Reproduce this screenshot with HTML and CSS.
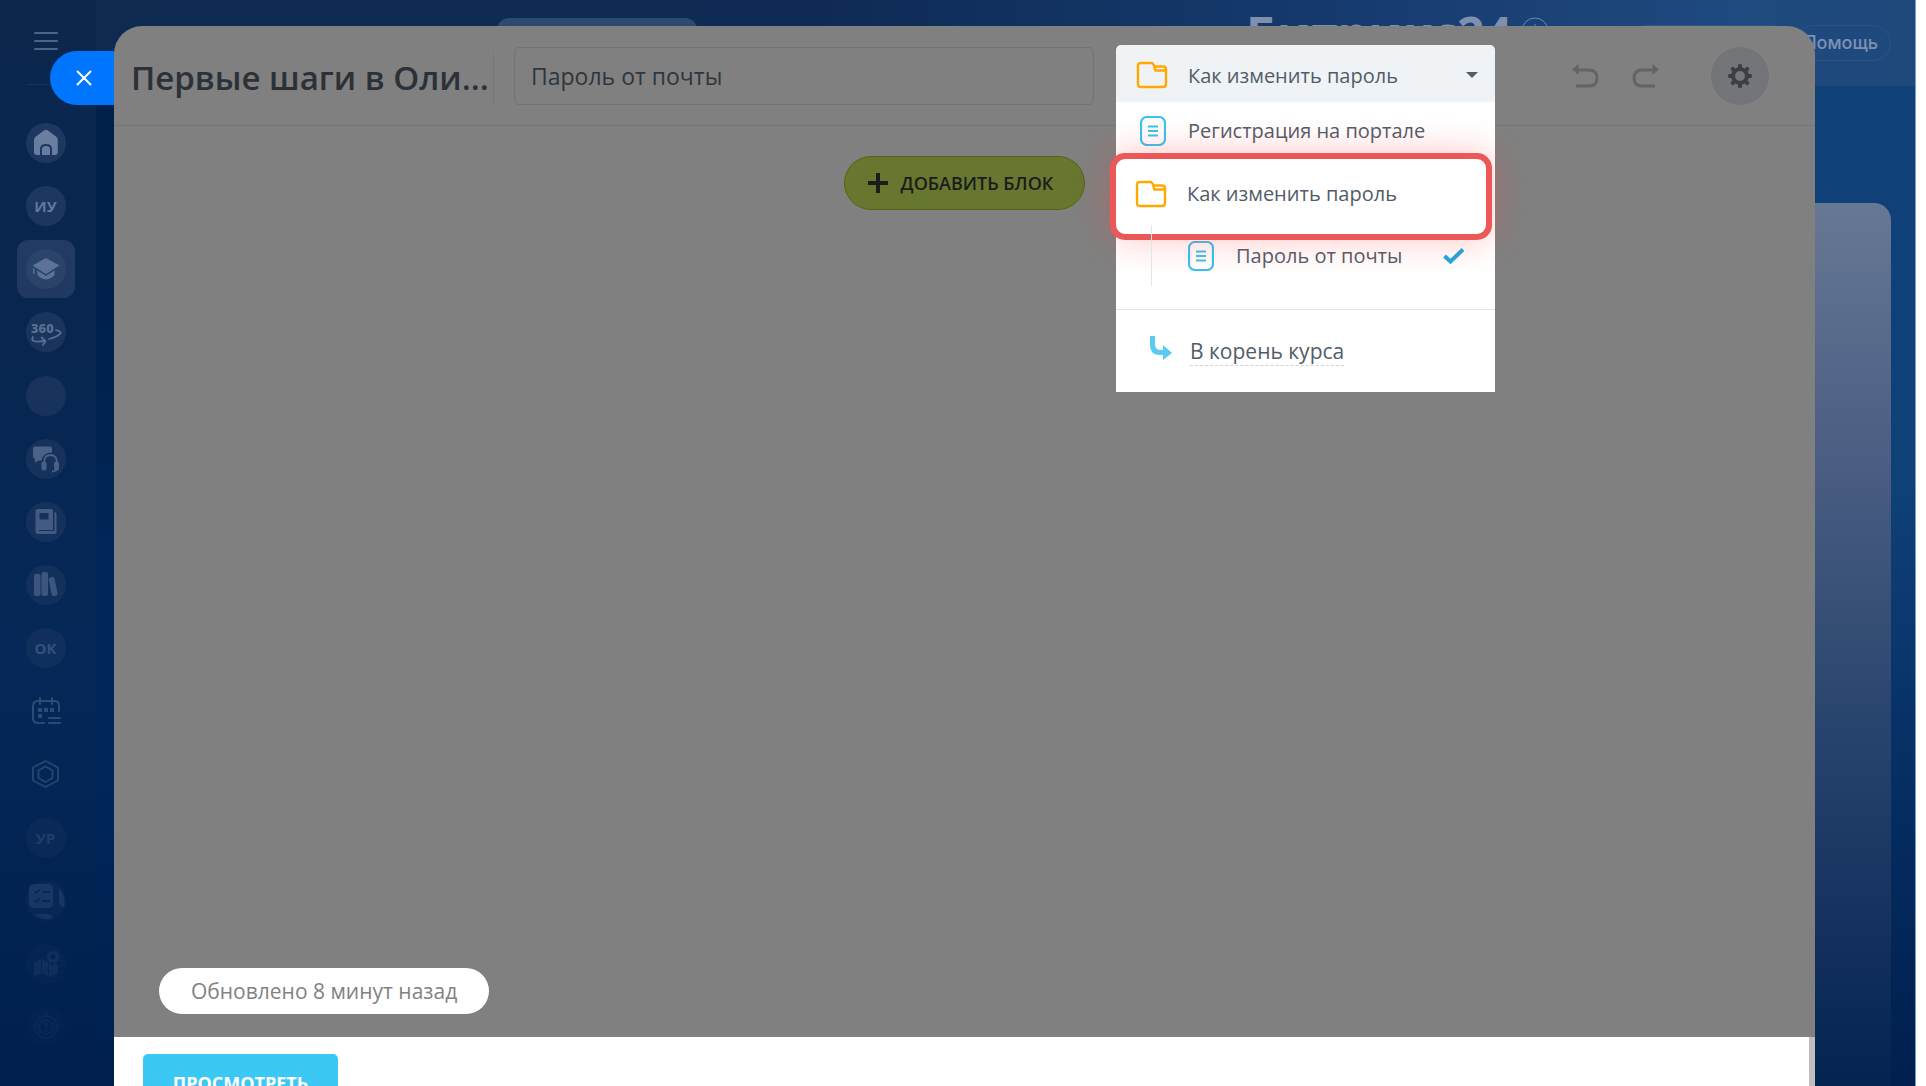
FILE: index.html
```html
<!DOCTYPE html>
<html lang="ru">
<head>
<meta charset="utf-8">
<title>Первые шаги — Битрикс24</title>
<link rel="stylesheet" href="styles.css">
</head>
<body>
<div class="desktop">
  <aside class="sidebar">
    <button class="burger" aria-label="Меню"><span></span><span></span><span></span></button>
    <div class="sidebar-line"></div>
    <nav class="nav">
      <a class="nav-item" href="#" aria-label="Главная"><svg viewBox="0 0 40 40"><path fill="currentColor" d="M18 7.500q2-1.600 4 0l8 6q1.800 1.400 1.800 3.500V29q0 3-3 3H26v-6q0-5-6-5t-6 5v6h-3q-3 0-3-3V17q0-2 1.800-3.500zM16 32v-6q0-3 4-3t4 3v6z"/></svg></a>
      <a class="nav-item" href="#">ИУ</a>
      <a class="nav-item active" href="#" aria-label="Обучение"><svg viewBox="0 0 40 40"><path fill="currentColor" d="M20 9l13.500 7.500L20 25 6.500 16.500zM11.500 21.500L20 27l8.500-5.500V26q-3.500 4-8.500 4.500-5-.5-8.500-4.500zM7 19l1.500 1v5H7z"/></svg></a>
      <a class="nav-item" href="#" aria-label="360"><svg viewBox="0 0 40 40"><g fill="none" stroke="currentColor" stroke-width="1.800" stroke-linecap="round" stroke-linejoin="round"><path d="M30 18q8 2 2 5.500-3 2-9 3.500M7 25q-3 5 6 4.500l6-.5M15.500 25.500l4 3.500-2.500 4"/></g><text x="5" y="21" class="nav-360">360</text></svg></a>
      <a class="nav-item" href="#" aria-label="Раздел"></a>
      <a class="nav-item" href="#" aria-label="Поддержка"><svg viewBox="0 0 40 40"><path fill="currentColor" d="M9 7.500h15q2 0 2 2v4q-9 0-10.500 8l-4 .5-2.500 2v-4q-2-.5-2-2.500v-8q0-2 2-2z"/><path d="M18 26v-3q.5-7 6.500-7t6.500 7v7q-1 2.500-5 2.500" fill="none" stroke="currentColor" stroke-width="1.800"/><rect x="15.500" y="22.500" width="5" height="9" rx="2" fill="currentColor"/><rect x="28" y="22.500" width="5" height="9" rx="2" fill="currentColor"/></svg></a>
      <a class="nav-item" href="#" aria-label="База знаний"><svg viewBox="0 0 40 40"><path fill="currentColor" fill-rule="evenodd" d="M12 7h13q2 0 2 2v19H13v1h15.500V10q2 0 2 2v18q0 2-2 2H12q-2.500 0-2.500-2.500V9.500Q9.500 7 12 7zm1.500 4v6.500h9V11z"/></svg></a>
      <a class="nav-item" href="#" aria-label="Библиотека"><svg viewBox="0 0 40 40" fill="currentColor"><rect x="8" y="9" width="6.500" height="22" rx="2"/><rect x="15.500" y="7" width="6.500" height="24" rx="2"/><rect x="24" y="12" width="6" height="19" rx="2" transform="rotate(-12 27 21)"/></svg></a>
      <a class="nav-item" href="#">ОК</a>
      <a class="nav-item plain" href="#" aria-label="Календарь"><svg viewBox="0 0 40 40"><g fill="none" stroke="currentColor" stroke-width="2" stroke-linecap="round"><path d="M18 32h-6q-5 0-5-5V15q0-5 5-5h17q4 0 4 5v5M14 7v6M26 7v6M23 27h11M23 32h11"/></g><path fill="currentColor" d="M12 17h4v4h-4zm6 0h4v4h-4zm6 0h4v4h-4zm-12 6h4v4h-4z"/></svg></a>
      <a class="nav-item plain" href="#" aria-label="Настройки"><svg viewBox="0 0 40 40"><g fill="none" stroke="currentColor" stroke-width="1.900" stroke-linejoin="round"><path d="M19.500 7L32 13.500v13L19.500 33 7 26.500v-13z"/><path d="M19.500 12.500l7 4v7.500l-7 4-7-4v-7.500z"/></g></svg></a>
      <a class="nav-item" href="#">УР</a>
      <a class="nav-item" href="#" aria-label="Задачи"><svg viewBox="0 0 40 40"><path fill="currentColor" fill-rule="evenodd" d="M9 3h13q5 0 5 5v14q0 5-5 5H8q-5 0-5-5V8q0-5 6-5zm-1 8l2.500 2 4-4-1.200-1.200-2.800 2.600L9 9.500zm8-1v2h8v-2zm-8 10l2.500 2 4-4-1.200-1.200-2.800 2.600L9 18.500zm8-1v2h8v-2zM33 7q7 8 5 19-5-1-5-6zM8 33h12q5 0 7 4-9 4-19-4z"/></svg></a>
      <a class="nav-item" href="#" aria-label="Карта"><svg viewBox="0 0 40 40"><path fill="currentColor" fill-rule="evenodd" d="M8 19l7-4v14l-7 4zm8-4l6 3v14l-6-3zm7 4l3-1 6 3v9l-9 3zM27 7q6 0 6 6 0 3-6 9-6-6-6-9 0-6 6-6zm0 3a2.800 2.800 0 100 5.600 2.800 2.800 0 000-5.600z"/></svg></a>
      <a class="nav-item" href="#" aria-label="Цели"><svg viewBox="0 0 40 40"><g fill="none" stroke="currentColor" stroke-width="2"><circle cx="20" cy="20" r="11"/><circle cx="20" cy="20" r="7"/><path d="M20 5v4M20 31v4M5 20h4M31 20h4M18 17l2.500-1.500V25"/></g></svg></a>
    </nav>
  </aside>
  <main class="main">
    <header class="topbar">
      <div class="topbar-tab"></div>
      <div class="logo">Битрикс24</div>
      <svg class="clock" viewBox="0 0 28 28"><path d="M14 7v7h5" /><circle cx="14" cy="14" r="13"/></svg>
      <div class="topbar-pill"></div>
      <a class="help" href="#">Помощь</a>
    </header>
    <div class="workarea"></div>
  </main>
</div>

<section class="panel">
  <button class="close" aria-label="Закрыть"><svg viewBox="0 0 16 16" width="16" height="16"><path d="M1 1l14 14M15 1L1 15"/></svg></button>
  <header class="panel-head">
    <h1 class="title">Первые шаги в Оли...</h1>
    <input class="name" type="text" aria-label="Название" value="Пароль от почты">
    <div class="picker">
      <button class="picker-toggle">
        <svg class="folder" viewBox="0 0 32 28"><path d="M5 2h11l3 3.500h8q3 0 3 3V23q0 3-3 3H5q-3 0-3-3V5q0-3 3-3zM18 5l1.500 4.500H30"/></svg>
        <span>Как изменить пароль</span>
        <i class="caret"></i>
      </button>
      <div class="picker-menu">
        <ul class="tree">
          <li><a class="row" href="#"><svg class="doc" viewBox="0 0 26 30"><rect x="1" y="1" width="24" height="28" rx="6"/><path d="M8 10.500h10M8 15h10M8 19.500h10"/></svg>Регистрация на портале</a></li>
          <li>
            <a class="row selected" href="#"><svg class="folder" viewBox="0 0 32 28"><path d="M5 2h11l3 3.500h8q3 0 3 3V23q0 3-3 3H5q-3 0-3-3V5q0-3 3-3zM18 5l1.500 4.500H30"/></svg>Как изменить пароль</a>
            <ul class="subtree">
              <li><a class="row" href="#"><svg class="doc" viewBox="0 0 26 30"><rect x="1" y="1" width="24" height="28" rx="6"/><path d="M8 10.500h10M8 15h10M8 19.500h10"/></svg>Пароль от почты<svg class="check" viewBox="0 0 22 16"><path d="M1.500 8l6 5.500L20 1.500"/></svg></a></li>
            </ul>
          </li>
        </ul>
        <div class="root-row">
          <svg class="arrow" viewBox="0 0 22 24"><path d="M0 0h5v8q0 6 6 6h2V9l9 8-9 7v-5h-3Q0 19 0 9z"/></svg>
          <a class="root-link" href="#">В корень курса</a>
        </div>
      </div>
    </div>
    <div class="tools">
      <button class="tool" aria-label="Отменить"><svg viewBox="0 0 27 24"><path class="line" d="M5 6h12q8 0 8 8t-8 8H4"/><path class="tip" d="M0 5.500L6.500 0v11z"/></svg></button>
      <button class="tool" aria-label="Повторить"><svg viewBox="0 0 27 24"><path class="line" d="M22 6H10q-8 0-8 8t8 8h13"/><path class="tip" d="M27 5.500L20.500 0v11z"/></svg></button>
      <button class="gear" aria-label="Настройки"><svg viewBox="0 0 24 24"><g fill="#3b3f43"><rect x="10" y="0" width="4" height="24" rx="1.500"/><rect x="10" y="0" width="4" height="24" rx="1.500" transform="rotate(45 12 12)"/><rect x="10" y="0" width="4" height="24" rx="1.500" transform="rotate(90 12 12)"/><rect x="10" y="0" width="4" height="24" rx="1.500" transform="rotate(135 12 12)"/><circle cx="12" cy="12" r="9"/></g><circle cx="12" cy="12" r="5" fill="#737578"/></svg></button>
    </div>
  </header>
  <div class="panel-body">
    <button class="add"><svg viewBox="0 0 20 20" width="20" height="20"><path d="M10 0v20M0 10h20"/></svg>ДОБАВИТЬ БЛОК</button>
    <p class="updated">Обновлено 8 минут назад</p>
  </div>
  <footer class="panel-foot"><button class="preview">ПРОСМОТРЕТЬ</button></footer>
</section>
</body>
</html>
```

FILE: styles.css
```css
* { box-sizing: border-box; }

body {
  margin: 0;
  height: 100vh;
  overflow: hidden;
  position: relative;
  background: #fff;
  font-family: "Open Sans", "Noto Sans", sans-serif;
}

button, input { font: inherit; margin: 0; }
button { padding: 0; border: 0; background: none; }
a { color: inherit; text-decoration: none; }
ul { list-style: none; margin: 0; padding: 0; }
svg { flex: none; display: block; }

/* Background portal */
.desktop {
  display: flex;
  height: 100%;
  margin-right: 10px;
  border-right: 1px solid #7f9abf;
  background:
    linear-gradient(180deg, rgba(0, 32, 80, 0) 45%, rgba(0, 36, 86, .7) 75%, #001f4f 100%),
    linear-gradient(90deg, rgba(1, 40, 92, 0) 0, rgba(1, 40, 92, 0) 10%, #0f4078 95%),
    linear-gradient(180deg, #00204a 0, #00204a 25%, #01285c 60%, #01285c 100%);
}

.sidebar {
  width: 96px;
  flex: none;
  display: flex;
  flex-direction: column;
  align-items: center;
  padding: 32px 5px 39px 0;
  background: linear-gradient(180deg, #0b274e 0, #08264f 30%, #052858 60%, #001f4e 100%);
}

.burger {
  width: 24px;
  height: 18px;
  display: flex;
  flex-direction: column;
  justify-content: space-between;
}
.burger span { height: 2px; background: #4d6485; border-radius: 1px; }
.sidebar-line { width: 38px; height: 1px; margin-top: 34px; background: #17325a; }

.nav {
  flex: 1;
  width: 60px;
  padding-top: 38px;
  display: flex;
  flex-direction: column;
  justify-content: space-between;
  align-items: center;
  -webkit-mask: linear-gradient(180deg, #000 0, rgba(0, 0, 0, .06) 100%);
  mask: linear-gradient(180deg, #000 0, rgba(0, 0, 0, .06) 100%);
}
.nav-item {
  width: 40px;
  height: 40px;
  flex: none;
  display: flex;
  align-items: center;
  justify-content: center;
  border-radius: 50%;
  background: #1f3962;
  color: #7083a6;
  font-size: 15px;
  font-weight: 700;
  line-height: 20px;
}
.nav-item svg { width: 40px; height: 40px; }
.nav-item.plain { background: none; }
.nav-item.active {
  border-radius: 4px;
  background: #263f67;
  box-shadow: 0 0 0 9px #263f67;
}
.nav-item.active svg { background: #314a71; border-radius: 50%; }
.nav-360 { font: 800 13px "Open Sans", sans-serif; fill: currentColor; }

.main { flex: 1; display: flex; flex-direction: column; }
.topbar {
  height: 86px;
  flex: none;
  display: flex;
  align-items: flex-start;
  padding-right: 24px;
  background: linear-gradient(90deg, #0f2a51 0, #0f2b55 40%, #163b70 70%, #1f4a7f 90%, #1f497b 100%);
}
.topbar-tab {
  width: 200px;
  height: 50px;
  margin: 18px auto 0 401px;
  border-radius: 12px;
  background: #2f4a70;
}
.logo {
  color: #7e90ad;
  font-size: 48px;
  font-weight: 700;
  line-height: 68px;
}
.clock { width: 28px; height: 28px; margin: 17px 80px 0 9px; fill: none; stroke: #6f88ae; stroke-width: 1; }
.topbar-pill, .help {
  height: 36px;
  margin-top: 25px;
  border: 1px solid #2b5488;
  border-radius: 18px;
}
.topbar-pill { width: 160px; margin-right: 6px; }
.help {
  width: 96px;
  padding-right: 12px;
  text-align: right;
  color: #7c92b5;
  font: 500 18px/34px Inter, "Open Sans", sans-serif;
}
.workarea {
  flex: 1;
  margin: 117px 24px 0 40px;
  border-radius: 17px 17px 0 0;
  background: linear-gradient(180deg, #667894 0, #4a5d82 30%, #24426c 62%, #12305b 84%, #04234f 100%);
}

/* Slide panel */
.panel {
  position: absolute;
  top: 26px;
  left: 114px;
  right: 111px;
  bottom: 0;
  display: flex;
  flex-direction: column;
  border-radius: 28px 28px 0 0;
  background: #808080;
}
.close {
  position: absolute;
  top: 25px;
  right: 100%;
  width: 64px;
  height: 54px;
  border-radius: 27px 0 0 27px;
  background: #0075ff;
  display: flex;
  align-items: center;
  padding-left: 26px;
}
.close path { fill: none; stroke: #fff; stroke-width: 2; }

.panel-head {
  height: 100px;
  flex: none;
  display: flex;
  align-items: center;
  padding: 0 46px 0 17px;
  border-bottom: 1px solid #757575;
}
.title {
  width: 363px;
  margin: 4px 20px 0 0;
  border-right: 1px solid #787878;
  color: #2b3137;
  font-size: 33px;
  font-weight: 600;
  line-height: 52px;
  white-space: nowrap;
}
.name {
  flex: 1;
  min-width: 0;
  height: 58px;
  padding: 0 16px;
  border: 1px solid #737373;
  border-radius: 5px;
  background: none;
  color: #2f363d;
  font-size: 23px;
}

/* Page picker */
.picker {
  position: relative;
  width: 379px;
  margin: 0 77px 4px 22px;
  color: #525c69;
  font-size: 20px;
}
.picker-toggle {
  width: 100%;
  height: 57px;
  display: flex;
  align-items: center;
  padding: 3px 17px 0 20px;
  gap: 20px;
  border-radius: 5px 5px 0 0;
  background: #eff3f5;
  color: inherit;
}
.caret {
  margin-left: auto;
  border: 6px solid transparent;
  border-top-color: #525c69;
  border-bottom: 0;
}
.picker-menu {
  position: absolute;
  top: 100%;
  left: 0;
  right: 0;
  z-index: 2;
  background: #fff;
}
.folder { width: 32px; height: 28px; fill: none; stroke: #ffa900; stroke-width: 2.4; }
.doc { width: 26px; height: 30px; fill: none; stroke: #36c3f2; stroke-width: 2.2; }
.row { display: flex; align-items: center; height: 51px; padding: 6px 0 0 24px; gap: 22px; }
.row.selected {
  position: relative;
  z-index: 1;
  height: 87px;
  margin: 0 3px 0 -6px;
  padding: 0 0 6px 19px;
  gap: 20px;
  border: 6px solid #ec5757;
  border-radius: 15px;
  background: #fff;
  box-shadow: 0 0 36px rgba(255, 60, 60, .3);
}
.subtree { position: relative; height: 69px; padding-left: 48px; }
.subtree::before {
  content: "";
  position: absolute;
  z-index: 2;
  left: 35px;
  top: -15px;
  height: 61px;
  border-left: 1px solid #e3e6e8;
}
.subtree .row { height: 31px; padding: 0 30px 0 24px; gap: 22px; }
.check { width: 22px; height: 16px; margin-left: auto; fill: none; stroke: #1fa8dc; stroke-width: 4; }
.root-row {
  display: flex;
  align-items: center;
  height: 83px;
  padding-left: 34px;
  gap: 18px;
  border-top: 1px solid #e2e4e6;
  font-size: 21px;
}
.arrow { width: 22px; height: 24px; fill: #5acaf0; margin-bottom: 6px; }
.root-link { line-height: 28px; border-bottom: 1px dashed #cfd3d6; }

.tools { display: flex; align-items: center; }
.tool { width: 27px; margin-right: 33px; }
.tool + .tool { margin-right: 52px; }
.line { fill: none; stroke: #626567; stroke-width: 3; }
.tip { fill: #626567; }
.gear {
  width: 58px;
  height: 58px;
  border-radius: 50%;
  background: #737578;
  display: flex;
  align-items: center;
  justify-content: center;
}
.gear svg { width: 24px; height: 24px; }

.panel-body {
  flex: 1;
  display: flex;
  flex-direction: column;
  align-items: center;
  justify-content: space-between;
  padding: 30px 45px 23px;
}
.add {
  width: 241px;
  height: 54px;
  display: flex;
  align-items: center;
  justify-content: center;
  gap: 13px;
  padding-right: 8px;
  border: 1px solid #52670f;
  border-radius: 27px;
  background: #677730;
  color: #1c1c1c;
  font-size: 18px;
  font-weight: 600;
}
.add path { fill: none; stroke: #1c1c1c; stroke-width: 4; }
.updated {
  align-self: flex-start;
  margin: 0;
  padding: 0 32px;
  border-radius: 23px;
  background: #fff;
  color: #828282;
  font-size: 21px;
  line-height: 46px;
}
.panel-foot {
  height: 49px;
  flex: none;
  padding: 17px 29px 0;
  border-right: 6px solid #bfbfbf;
  background: #fff;
}
.preview {
  width: 195px;
  height: 58px;
  border-radius: 5px 5px 0 0;
  background: #3bc8f5;
  color: #fff;
  font-size: 18px;
  font-weight: 700;
}
```
